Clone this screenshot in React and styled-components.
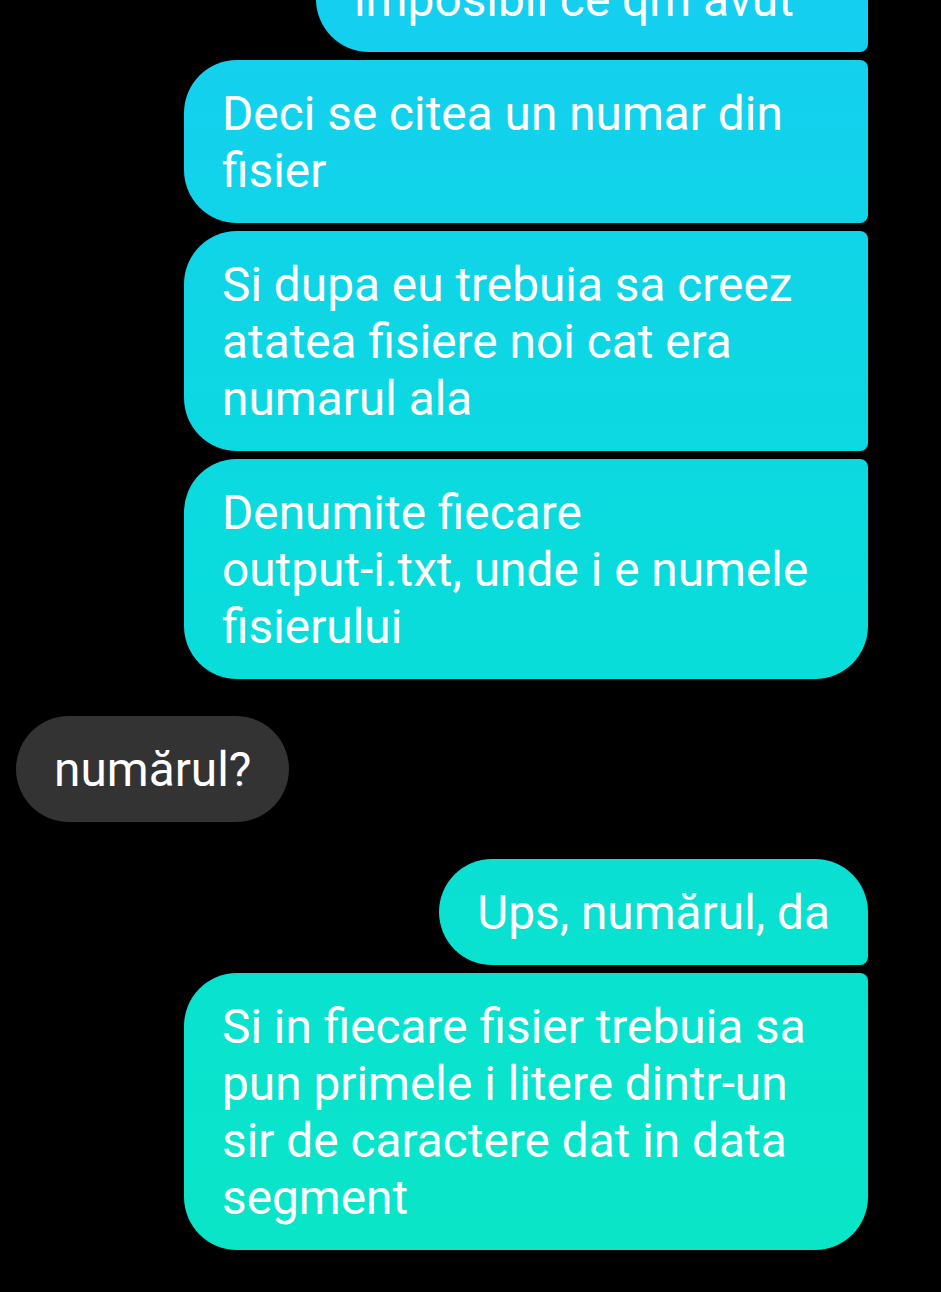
import React from "react";
import styled, { createGlobalStyle, css } from "styled-components";

const Global = createGlobalStyle`
  html, body {
    margin: 0;
    padding: 0;
    background: #000;
    overflow: hidden;
  }
  body {
    font-family: Roboto, "Noto Sans", "Liberation Sans", sans-serif;
  }
`;

const Screen = styled.div`
  width: 941px;
  height: 1292px;
  background: #000;
  overflow: hidden;
`;

const Thread = styled.div`
  display: flex;
  flex-direction: column;
  margin-top: -54px;
  padding: 0 73px 0 16px;
`;

const Row = styled.div`
  display: flex;
  justify-content: ${(p) => (p.$out ? "flex-end" : "flex-start")};
  margin-top: ${(p) => p.$gap}px;
`;

const BIG = 53;
const SMALL = 8;

const Bubble = styled.div`
  box-sizing: border-box;
  max-width: 684px;
  min-width: ${(p) => p.$minW || 0}px;
  padding: 26px 38px 23px 38px;
  font-size: 47.8px;
  line-height: 57px;
  color: #fff;
  letter-spacing: 0;
  ${(p) =>
    p.$out
      ? css`
          background: linear-gradient(180deg, #15cff0 0%, #09dcdc 45%, #0ae6c6 100%);
          background-attachment: fixed;
          background-size: 941px 1292px;
          border-radius: ${BIG}px
            ${p.$pos === "first" || p.$pos === "single" ? BIG : SMALL}px
            ${p.$pos === "last" || p.$pos === "single" ? BIG : SMALL}px ${BIG}px;
        `
      : css`
          background: #333333;
          border-radius: ${BIG}px;
        `}
`;

const NoBreak = styled.span`
  white-space: nowrap;
`;

const messages = [
  { out: true, pos: "mid", gap: 0, minW: 552, text: "imposibil ce qm avut" },
  { out: true, pos: "mid", gap: 8, text: "Deci se citea un numar din fisier" },
  {
    out: true,
    pos: "mid",
    gap: 8,
    text: "Si dupa eu trebuia sa creez atatea fisiere noi cat era numarul ala",
  },
  {
    out: true,
    pos: "last",
    gap: 8,
    text: (
      <>
        Denumite fiecare <NoBreak>output-i.txt,</NoBreak> unde i e numele fisierului
      </>
    ),
  },
  { out: false, pos: "single", gap: 37, text: "numărul?" },
  { out: true, pos: "first", gap: 37, text: "Ups, numărul, da" },
  {
    out: true,
    pos: "last",
    gap: 8,
    text: "Si in fiecare fisier trebuia sa pun primele i litere dintr-un sir de caractere dat in data segment",
  },
];

export default function App() {
  return (
    <Screen>
      <Global />
      <Thread>
        {messages.map((m, i) => (
          <Row key={i} $out={m.out} $gap={m.gap}>
            <Bubble $out={m.out} $pos={m.pos} $minW={m.minW}>
              {m.text}
            </Bubble>
          </Row>
        ))}
      </Thread>
    </Screen>
  );
}
